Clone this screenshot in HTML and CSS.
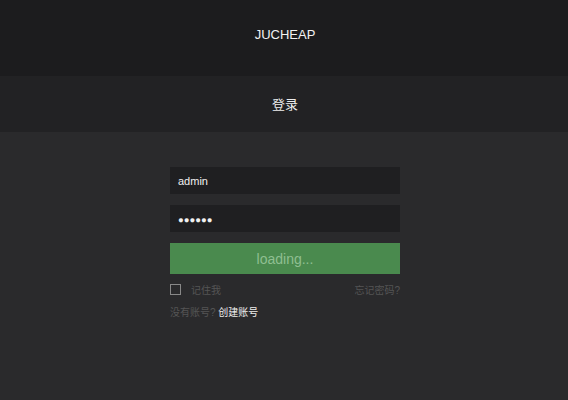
FILE: index.html
```html
<!DOCTYPE html>
<html lang="zh">
<head>
<meta charset="utf-8">
<link rel="stylesheet" href="styles.css">
</head>
<body>
<header class="top">JUCHEAP</header>
<div class="title">登录</div>
<main class="body">
  <form class="login">
    <div class="field">admin</div>
    <div class="field pwd">●●●●●●</div>
    <div class="btn">loading...</div>
    <div class="row">
      <label class="remember"><span class="box"></span><span>记住我</span></label>
      <span class="forgot">忘记密码?</span>
    </div>
    <div class="reg">没有账号? <span class="create">创建账号</span></div>
  </form>
</main>
</body>
</html>
```

FILE: styles.css
```css
* { box-sizing: border-box; margin: 0; padding: 0; }
html, body { height: 100%; }
body {
  background: #2a2a2c;
  font-family: "Liberation Sans", Arial, "Noto Sans CJK SC", sans-serif;
  color: #fff;
  display: flex;
  flex-direction: column;
}
.top {
  height: 76px;
  background: #1c1c1e;
  display: flex;
  align-items: center;
  justify-content: center;
  font-size: 13px;
  color: #f2f2f2;
  padding-bottom: 8px;
  padding-left: 2px;
}
.title {
  height: 56px;
  background: #222224;
  display: flex;
  align-items: center;
  justify-content: center;
  font-size: 13px;
  color: #eee;
  padding-bottom: 2px;
  padding-left: 2px;
}
.body { flex: 1; display: flex; justify-content: center; padding-top: 35px; padding-left: 2px; }
.login { width: 230px; display: flex; flex-direction: column; }
.field {
  height: 27px;
  background: #1f1f21;
  color: #f0f0f0;
  font-size: 11px;
  padding-left: 8px;
  display: flex;
  align-items: center;
  margin-bottom: 11px;
}
.pwd { font-size: 9.5px; letter-spacing: 0; padding-top: 1px; }
.btn {
  height: 31px;
  background: #4a8a4e;
  color: #8fbf91;
  font-size: 14px;
  display: flex;
  align-items: center;
  justify-content: center;
}
.row {
  display: flex;
  justify-content: space-between;
  align-items: center;
  margin-top: 9px;
  height: 12px;
  font-size: 10px;
  color: #555;
}
.remember { display: flex; align-items: center; gap: 10px; }
.box { width: 11px; height: 11px; border: 1px solid #888; display: block; }
.forgot { color: #555; }
.reg { margin-top: 12px; font-size: 10px; color: #555; line-height: 12px; }
.create { color: #eee; }
```
